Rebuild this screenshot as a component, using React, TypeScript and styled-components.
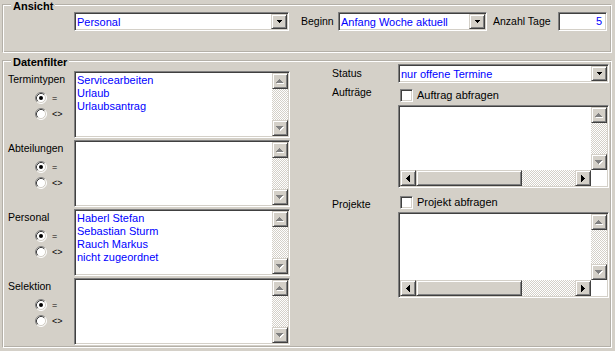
import React from "react";
import styled, { createGlobalStyle, css } from "styled-components";

const FACE = "#D4D0C8";
const SHADOW = "#808080";
const DARK = "#404040";
const BLUE = "#0000FF";

const Global = createGlobalStyle`
  html, body { margin: 0; padding: 0; background: ${FACE}; }
  body {
    font-family: "Liberation Sans", Arial, sans-serif;
    font-size: 11px;
    color: #000;
    width: 615px;
    height: 351px;
    overflow: hidden;
  }
`;

const sunken = css`
  box-sizing: border-box;
  border: 1px solid;
  border-color: ${SHADOW} #fff #fff ${SHADOW};
  padding: 1px;
  box-shadow: inset 1px 1px 0 ${DARK}, inset -1px -1px 0 ${FACE};
  background: #fff;
`;

const raised = css`
  box-sizing: border-box;
  background: ${FACE};
  border: 1px solid;
  border-color: ${FACE} ${DARK} ${DARK} ${FACE};
  box-shadow: inset 1px 1px 0 #fff, inset -1px -1px 0 ${SHADOW};
`;

const Window = styled.div`
  width: 615px;
  height: 351px;
  box-sizing: border-box;
  padding: 5px 3px 0 3px;
  background: ${FACE};
`;

const GroupBox = styled.section<{ $mt?: number; $h: number }>`
  position: relative;
  box-sizing: border-box;
  margin-top: ${(p) => p.$mt ?? 0}px;
  height: ${(p) => p.$h}px;
  border: 1px solid #fff;
  box-shadow: -1px -1px 0 #b4b0a8, inset -1px -1px 0 #b4b0a8;
`;

const Legend = styled.span`
  position: absolute;
  top: -6px;
  left: 7px;
  padding: 0 2px;
  background: ${FACE};
  font-weight: bold;
  font-size: 11px;
  line-height: 13px;
`;

const AnsichtRow = styled.div`
  display: flex;
  align-items: center;
  padding: 6px 0 0 70px;
`;

const FieldLabel = styled.span<{ $ml?: number; $w: number }>`
  margin-left: ${(p) => p.$ml ?? 0}px;
  width: ${(p) => p.$w}px;
  flex: none;
  font-size: 10.5px;
  line-height: 13px;
  white-space: nowrap;
`;

const Combo = styled.div<{ $w: number }>`
  ${sunken};
  width: ${(p) => p.$w}px;
  height: 19px;
  display: flex;
  flex: none;
`;

const ComboText = styled.span`
  flex: 1;
  color: ${BLUE};
  font-size: 11px;
  line-height: 15px;
  padding: 1px 0 0 1px;
  box-sizing: border-box;
  white-space: nowrap;
  overflow: hidden;
`;

const ComboButton = styled.span`
  ${raised};
  width: 16px;
  height: 15px;
  display: flex;
  align-items: center;
  justify-content: center;
  flex: none;
`;

const TextBox = styled.div<{ $w: number }>`
  ${sunken};
  width: ${(p) => p.$w}px;
  height: 19px;
  flex: none;
  color: ${BLUE};
  text-align: right;
  font-size: 11px;
  line-height: 15px;
  padding: 1px 4px 0 1px;
`;

const FilterBody = styled.div`
  display: flex;
  gap: 42px;
  padding: 2px 0 0 4px;
`;

const LeftColumn = styled.div`
  display: flex;
  flex-direction: column;
  gap: 2px;
  margin-top: 7px;
  width: 282px;
`;

const FilterRow = styled.div`
  display: grid;
  grid-template-columns: 66px 216px;
  height: 67px;
`;

const LabelCell = styled.div`
  display: flex;
  flex-direction: column;
`;

const FilterLabel = styled.span`
  font-size: 10.5px;
  line-height: 13px;
  padding-top: 2px;
`;

const RadioGroup = styled.div`
  display: flex;
  flex-direction: column;
  margin: 4px 0 0 27px;
`;

const RadioItem = styled.label`
  display: flex;
  align-items: center;
  gap: 5px;
  height: 16px;
  font-size: 9px;
  line-height: 12px;
`;

const ListBox = styled.div<{ $h: number }>`
  ${sunken};
  height: ${(p) => p.$h}px;
  display: flex;
`;

const ScrollListBox = styled.div<{ $h: number }>`
  ${sunken};
  height: ${(p) => p.$h}px;
  display: grid;
  grid-template-columns: 1fr 16px;
  grid-template-rows: 1fr 16px;
`;

const ListItems = styled.div`
  flex: 1;
  min-width: 0;
  padding: 1px 0 0 1px;
  color: ${BLUE};
  font-size: 11px;
  line-height: 13px;
  white-space: nowrap;
  overflow: hidden;
`;

const VScroll = styled.div`
  display: flex;
  flex-direction: column;
  width: 16px;
  flex: none;
`;

const HScroll = styled.div`
  display: flex;
  height: 16px;
`;

const ScrollBtn = styled.div`
  ${raised};
  width: 16px;
  height: 16px;
  flex: none;
  display: flex;
  align-items: center;
  justify-content: center;
`;

const Track = styled.div`
  flex: 1;
  background: repeating-conic-gradient(${FACE} 0 25%, #fff 0 50%) 0 0 / 2px 2px;
`;

const Thumb = styled.div<{ $w: number }>`
  ${raised};
  width: ${(p) => p.$w}px;
  flex: none;
`;

const Corner = styled.div`
  background: #fff;
`;

const RightColumn = styled.div`
  display: flex;
  flex-direction: column;
  width: 277px;
`;

const RightRow = styled.div<{ $mt?: number }>`
  display: grid;
  grid-template-columns: 66px 211px;
  align-items: start;
  margin-top: ${(p) => p.$mt ?? 0}px;
`;

const SideLabel = styled.span<{ $dy?: number }>`
  font-size: 10.5px;
  line-height: 13px;
  margin-top: ${(p) => p.$dy ?? 0}px;
`;

const CheckField = styled.label`
  display: flex;
  align-items: center;
  gap: 4px;
  height: 15px;
  padding-left: 2px;
  font-size: 11px;
  line-height: 13px;
`;

const CheckBox = styled.span`
  ${sunken};
  width: 13px;
  height: 13px;
  flex: none;
`;

const RadioSvg = styled.svg`
  flex: none;
  display: block;
`;

type Dir = "up" | "down" | "left" | "right";

function triRects(dir: Dir, size: number) {
  const r: { x: number; y: number; w: number; h: number }[] = [];
  for (let i = 0; i < size; i++) {
    if (dir === "up") r.push({ x: size - 1 - i, y: i, w: 2 * i + 1, h: 1 });
    if (dir === "down") r.push({ x: i, y: i, w: 2 * (size - 1 - i) + 1, h: 1 });
    if (dir === "left") r.push({ x: i, y: size - 1 - i, w: 1, h: 2 * i + 1 });
    if (dir === "right") r.push({ x: i, y: i, w: 1, h: 2 * (size - 1 - i) + 1 });
  }
  return r;
}

const Arrow = ({ dir, size = 4, disabled }: { dir: Dir; size?: number; disabled?: boolean }) => {
  const vertical = dir === "up" || dir === "down";
  const w = (vertical ? 2 * size - 1 : size) + (disabled ? 1 : 0);
  const h = (vertical ? size : 2 * size - 1) + (disabled ? 1 : 0);
  const rects = triRects(dir, size);
  return (
    <svg width={w} height={h} viewBox={`0 0 ${w} ${h}`} shapeRendering="crispEdges" style={{ display: "block" }}>
      {disabled &&
        rects.map((r, i) => <rect key={`s${i}`} x={r.x + 1} y={r.y + 1} width={r.w} height={r.h} fill="#fff" />)}
      {rects.map((r, i) => (
        <rect key={i} x={r.x} y={r.y} width={r.w} height={r.h} fill={disabled ? SHADOW : "#000"} />
      ))}
    </svg>
  );
};

const Radio = ({ checked }: { checked?: boolean }) => (
  <RadioSvg width={12} height={12} viewBox="0 0 12 12">
    <circle cx="6" cy="6" r="5" fill="#fff" />
    <path d="M9.89 2.11 A5.5 5.5 0 0 0 2.11 9.89" stroke={SHADOW} fill="none" />
    <path d="M2.11 9.89 A5.5 5.5 0 0 0 9.89 2.11" stroke="#fff" fill="none" />
    <path d="M9.18 2.82 A4.5 4.5 0 0 0 2.82 9.18" stroke={DARK} fill="none" />
    <path d="M2.82 9.18 A4.5 4.5 0 0 0 9.18 2.82" stroke={FACE} fill="none" />
    {checked && <circle cx="6" cy="6" r="2" fill="#000" />}
  </RadioSvg>
);

const ComboBox = ({ value, width }: { value: string; width: number }) => (
  <Combo $w={width}>
    <ComboText>{value}</ComboText>
    <ComboButton>
      <Arrow dir="down" size={3} />
    </ComboButton>
  </Combo>
);

const VerticalBar = () => (
  <VScroll>
    <ScrollBtn>
      <Arrow dir="up" disabled />
    </ScrollBtn>
    <Track />
    <ScrollBtn>
      <Arrow dir="down" disabled />
    </ScrollBtn>
  </VScroll>
);

const FilterList = ({ label, items }: { label: string; items: string[] }) => (
  <FilterRow>
    <LabelCell>
      <FilterLabel>{label}</FilterLabel>
      <RadioGroup>
        <RadioItem>
          <Radio checked />=
        </RadioItem>
        <RadioItem>
          <Radio />
          &lt;&gt;
        </RadioItem>
      </RadioGroup>
    </LabelCell>
    <ListBox $h={67}>
      <ListItems>
        {items.map((t) => (
          <div key={t}>{t}</div>
        ))}
      </ListItems>
      <VerticalBar />
    </ListBox>
  </FilterRow>
);

const DoubleScrollList = ({ height }: { height: number }) => (
  <ScrollListBox $h={height}>
    <ListItems />
    <VerticalBar />
    <HScroll>
      <ScrollBtn>
        <Arrow dir="left" />
      </ScrollBtn>
      <Thumb $w={106} />
      <Track />
      <ScrollBtn>
        <Arrow dir="right" />
      </ScrollBtn>
    </HScroll>
    <Corner />
  </ScrollListBox>
);

export default function App() {
  return (
    <Window>
      <Global />
      <GroupBox $h={48}>
        <Legend>Ansicht</Legend>
        <AnsichtRow>
          <ComboBox value="Personal" width={215} />
          <FieldLabel $ml={12} $w={37}>
            Beginn
          </FieldLabel>
          <ComboBox value="Anfang Woche aktuell" width={149} />
          <FieldLabel $ml={6} $w={65}>
            Anzahl Tage
          </FieldLabel>
          <TextBox $w={49}>5</TextBox>
        </AnsichtRow>
      </GroupBox>

      <GroupBox $mt={8} $h={287}>
        <Legend>Datenfilter</Legend>
        <FilterBody>
          <LeftColumn>
            <FilterList label="Termintypen" items={["Servicearbeiten", "Urlaub", "Urlaubsantrag"]} />
            <FilterList label="Abteilungen" items={[]} />
            <FilterList
              label="Personal"
              items={["Haberl Stefan", "Sebastian Sturm", "Rauch Markus", "nicht zugeordnet"]}
            />
            <FilterList label="Selektion" items={[]} />
          </LeftColumn>

          <RightColumn>
            <RightRow>
              <SideLabel $dy={3}>Status</SideLabel>
              <ComboBox value="nur offene Termine" width={211} />
            </RightRow>
            <RightRow $mt={5}>
              <SideLabel $dy={-2}>Aufträge</SideLabel>
              <CheckField>
                <CheckBox />
                Auftrag abfragen
              </CheckField>
            </RightRow>
            <RightRow $mt={2}>
              <span />
              <DoubleScrollList height={83} />
            </RightRow>
            <RightRow $mt={7}>
              <SideLabel $dy={3}>Projekte</SideLabel>
              <CheckField>
                <CheckBox />
                Projekt abfragen
              </CheckField>
            </RightRow>
            <RightRow $mt={1}>
              <span />
              <DoubleScrollList height={86} />
            </RightRow>
          </RightColumn>
        </FilterBody>
      </GroupBox>
    </Window>
  );
}
